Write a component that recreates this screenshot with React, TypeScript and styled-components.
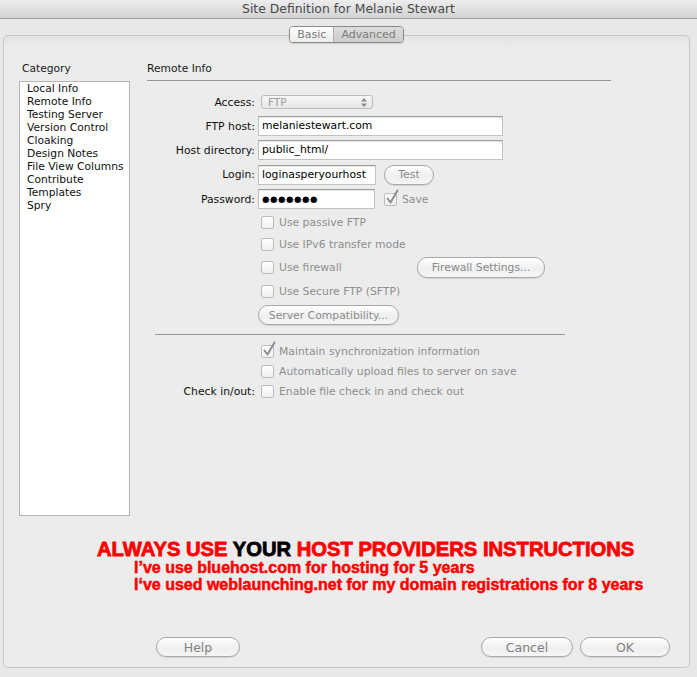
import React from 'react'
import styled, { createGlobalStyle } from 'styled-components'

const GlobalStyle = createGlobalStyle`
  html, body {
    margin: 0;
    padding: 0;
    background: #e8e8e8;
  }
  body {
    font-family: 'DejaVu Sans', 'Liberation Sans', sans-serif;
  }
`

const categories = [
  'Local Info',
  'Remote Info',
  'Testing Server',
  'Version Control',
  'Cloaking',
  'Design Notes',
  'File View Columns',
  'Contribute',
  'Templates',
  'Spry',
]

const CheckMark = () => (
  <svg width="14" height="17" viewBox="0 0 14 17">
    <path
      d="M2.5 9.5 L5.5 13.5 L12.5 1.5"
      fill="none"
      stroke="#8d8d8d"
      strokeWidth="2"
      strokeLinecap="round"
      strokeLinejoin="round"
    />
  </svg>
)

const Check: React.FC<{ checked?: boolean; children: React.ReactNode; width?: number }> = props => (
  <CheckItem width={props.width}>
    <Box>{props.checked && <Tick><CheckMark /></Tick>}</Box>
    <span>{props.children}</span>
  </CheckItem>
)

export default function App() {
  return (
    <Window>
      <GlobalStyle />
      <TitleBar>Site Definition for Melanie Stewart</TitleBar>
      <TabsRow>
        <Tabs>
          <Tab>Basic</Tab>
          <Tab active>Advanced</Tab>
        </Tabs>
      </TabsRow>
      <Panel>
        <Columns>
          <Sidebar>
            <SectionTitle indent>Category</SectionTitle>
            <CategoryList>
              {categories.map(c => (
                <CategoryItem key={c}>{c}</CategoryItem>
              ))}
            </CategoryList>
          </Sidebar>
          <Main>
            <MainHeader>Remote Info</MainHeader>
            <FormRow h={24}>
              <Label>Access:</Label>
              <Control>
                <Select>
                  <span>FTP</span>
                  <Arrows>
                    <svg width="6" height="9" viewBox="0 0 6 9">
                      <path d="M0 3.5 L3 0 L6 3.5 Z M0 5.5 L3 9 L6 5.5 Z" fill="#8a8a8a" />
                    </svg>
                  </Arrows>
                </Select>
              </Control>
            </FormRow>
            <FormRow h={24}>
              <Label>FTP host:</Label>
              <Control>
                <TextField width={245} readOnly value="melaniestewart.com" />
              </Control>
            </FormRow>
            <FormRow h={24}>
              <Label>Host directory:</Label>
              <Control>
                <TextField width={245} readOnly value="public_html/" />
              </Control>
            </FormRow>
            <FormRow h={25}>
              <Label>Login:</Label>
              <Control>
                <TextField width={118} readOnly value="loginasperyourhost" />
                <PushButton width={50} offset={8}>Test</PushButton>
              </Control>
            </FormRow>
            <FormRow h={24}>
              <Label>Password:</Label>
              <Control>
                <PasswordField width={117} readOnly value="●●●●●●●" />
                <SaveCheck>
                  <Check checked>Save</Check>
                </SaveCheck>
              </Control>
            </FormRow>
            <FormRow h={22}>
              <span />
              <Control>
                <Check>Use passive FTP</Check>
              </Control>
            </FormRow>
            <FormRow h={22}>
              <span />
              <Control>
                <Check>Use IPv6 transfer mode</Check>
              </Control>
            </FormRow>
            <FormRow h={25}>
              <span />
              <Control>
                <Check width={156}>Use firewall</Check>
                <PushButton width={128} tall>Firewall Settings...</PushButton>
              </Control>
            </FormRow>
            <FormRow h={23}>
              <span />
              <Control>
                <Check>Use Secure FTP (SFTP)</Check>
              </Control>
            </FormRow>
            <FormRow h={24}>
              <span />
              <Control>
                <PushButton width={141}>Server Compatibility...</PushButton>
              </Control>
            </FormRow>
            <Separator />
            <FormRow h={20}>
              <span />
              <Control>
                <Check checked>Maintain synchronization information</Check>
              </Control>
            </FormRow>
            <FormRow h={20}>
              <span />
              <Control>
                <Check>Automatically upload files to server on save</Check>
              </Control>
            </FormRow>
            <FormRow h={20}>
              <Label>Check in/out:</Label>
              <Control>
                <Check>Enable file check in and check out</Check>
              </Control>
            </FormRow>
          </Main>
        </Columns>
        <Notice>
          <NoticeHead>
            ALWAYS USE <Black>YOUR</Black> HOST PROVIDERS INSTRUCTIONS
          </NoticeHead>
          <NoticeLine>I’ve use bluehost.com for hosting for 5 years</NoticeLine>
          <NoticeLine>I‘ve used weblaunching.net for my domain registrations for 8 years</NoticeLine>
        </Notice>
        <Footer>
          <FooterButton width={84}>Help</FooterButton>
          <FooterSpacer />
          <FooterButton width={92}>Cancel</FooterButton>
          <FooterButton width={90}>OK</FooterButton>
        </Footer>
      </Panel>
    </Window>
  )
}

const Window = styled.div`
  width: 697px;
  height: 677px;
  background: #e8e8e8;
  display: flex;
  flex-direction: column;
  overflow: hidden;
`

const TitleBar = styled.div`
  height: 19px;
  box-sizing: border-box;
  border-bottom: 1px solid #a3a3a3;
  background: linear-gradient(#ededed, #d3d3d3);
  display: flex;
  align-items: center;
  justify-content: center;
  padding-bottom: 1px;
  font-size: 12.4px;
  color: #4a4a4a;
`

const TabsRow = styled.div`
  display: flex;
  justify-content: center;
  padding: 0 7px 0 3px;
  margin-top: 7px;
  position: relative;
  z-index: 1;
`

const Tabs = styled.div`
  display: flex;
  height: 17px;
  box-sizing: border-box;
  border: 1px solid #8a8a8a;
  border-radius: 4px;
  overflow: hidden;
  box-shadow: 0 1px 1px rgba(0, 0, 0, 0.12);
`

const Tab = styled.div<{ active?: boolean }>`
  display: flex;
  align-items: center;
  padding: 0 7px;
  font-size: 11px;
  color: #7c7c7c;
  background: ${p =>
    p.active ? 'linear-gradient(#dcdcdc, #cdcdcd)' : 'linear-gradient(#ffffff, #ececec)'};
  & + & {
    border-left: 1px solid #b0b0b0;
  }
`

const Panel = styled.div`
  margin: -8px 7px 0 3px;
  height: 633px;
  box-sizing: border-box;
  border: 1px solid #c6c6c6;
  border-radius: 5px;
  background: linear-gradient(#e3e3e3, #ececec 12px);
  display: flex;
  flex-direction: column;
  padding: 26px 19px 10px 15px;
`

const Columns = styled.div`
  display: flex;
  gap: 17px;
  height: 454px;
`

const Sidebar = styled.div`
  width: 111px;
  display: flex;
  flex-direction: column;
`

const SectionTitle = styled.div<{ indent?: boolean }>`
  font-size: 10.7px;
  line-height: 13px;
  color: #1a1a1a;
  padding-left: ${p => (p.indent ? '3px' : '0')};
`

const CategoryList = styled.ul`
  list-style: none;
  margin: 6px 0 0;
  padding: 0 0 0 7px;
  flex: 1;
  background: #ffffff;
  border: 1px solid #b4b4b4;
`

const CategoryItem = styled.li`
  font-size: 10.7px;
  line-height: 13px;
  color: #111;
`

const Main = styled.div`
  width: 464px;
  display: flex;
  flex-direction: column;
`

const MainHeader = styled.div`
  font-size: 10.7px;
  line-height: 13px;
  color: #1a1a1a;
  padding-bottom: 5px;
  border-bottom: 1px solid #959595;
  margin-bottom: 9px;
`

const FormRow = styled.div<{ h: number }>`
  display: grid;
  grid-template-columns: 108px 1fr;
  column-gap: 3px;
  align-items: center;
  height: ${p => p.h}px;
`

const Label = styled.span`
  text-align: right;
  font-size: 10.8px;
  color: #111;
`

const Control = styled.div`
  display: flex;
  align-items: center;
`

const TextField = styled.input<{ width: number }>`
  width: ${p => p.width}px;
  height: 20px;
  box-sizing: border-box;
  border: 1px solid #c2c2c2;
  border-top-color: #9c9c9c;
  background: #ffffff;
  padding: 0 3px 1px;
  font-family: 'DejaVu Sans', sans-serif;
  font-size: 10.8px;
  line-height: 17px;
  color: #000;
  box-shadow: inset 0 1px 1px rgba(0, 0, 0, 0.1);
  outline: none;
  margin: 0;
`

const PasswordField = styled(TextField)`
  font-size: 8.6px;
  letter-spacing: 0.5px;
`

const Select = styled.div`
  margin-left: 3px;
  width: 112px;
  height: 14px;
  box-sizing: border-box;
  border: 1px solid #bcbcbc;
  border-radius: 3px;
  background: linear-gradient(#f7f7f7, #e6e6e6);
  display: flex;
  align-items: center;
  justify-content: space-between;
  padding: 0 5px 0 6px;
  font-size: 10.5px;
  color: #9c9c9c;
`

const Arrows = styled.span`
  display: flex;
  align-items: center;
`

const PushButton = styled.button<{ width: number; offset?: number; tall?: boolean }>`
  width: ${p => p.width}px;
  height: ${p => (p.tall ? 21 : 20)}px;
  margin: 0 0 0 ${p => p.offset || 0}px;
  padding: 0;
  box-sizing: border-box;
  border: 1px solid #a8a8a8;
  border-radius: 10px;
  background: linear-gradient(#ffffff, #efefef 55%, #f6f6f6);
  box-shadow: 0 1px 1px rgba(0, 0, 0, 0.1);
  font-family: 'DejaVu Sans', sans-serif;
  font-size: 10.8px;
  color: #8a8a8a;
`

const CheckItem = styled.label<{ width?: number }>`
  display: flex;
  align-items: center;
  gap: 5px;
  margin-left: 3px;
  font-size: 10.8px;
  color: #8e8e8e;
  ${p => (p.width ? `width: ${p.width}px;` : '')}
`

const Box = styled.span`
  position: relative;
  width: 13px;
  height: 13px;
  box-sizing: border-box;
  border: 1px solid #bcbcbc;
  border-radius: 2px;
  background: linear-gradient(#ffffff, #efefef);
  flex-shrink: 0;
`

const Tick = styled.span`
  position: absolute;
  left: 0;
  top: -5px;
  display: flex;
`

const SaveCheck = styled.div`
  margin-left: 6px;
`

const Separator = styled.div`
  margin: 7px 0 6px 8px;
  width: 410px;
  border-top: 1px solid #959595;
`

const Notice = styled.div`
  margin: 24px 0 0 78px;
  font-family: 'Liberation Sans', Arial, sans-serif;
  font-weight: 700;
  color: #ff0000;
  -webkit-text-stroke: 0.5px #ff0000;
`

const NoticeHead = styled.div`
  font-size: 20.2px;
  line-height: 19px;
  -webkit-text-stroke-width: 0.8px;
`

const Black = styled.span`
  color: #000;
  -webkit-text-stroke-color: #000;
`

const NoticeLine = styled.div`
  margin-left: 37px;
  font-size: 16px;
  line-height: 17px;
`

const Footer = styled.div`
  margin-top: auto;
  display: flex;
  align-items: center;
  gap: 7px;
  padding-left: 137px;
`

const FooterSpacer = styled.div`
  flex: 1;
`

const FooterButton = styled.button<{ width: number }>`
  width: ${p => p.width}px;
  height: 20px;
  padding: 0;
  box-sizing: border-box;
  border: 1px solid #a8a8a8;
  border-radius: 10px;
  background: linear-gradient(#ffffff, #efefef 55%, #f6f6f6);
  box-shadow: 0 1px 1px rgba(0, 0, 0, 0.1);
  font-family: 'DejaVu Sans', sans-serif;
  font-size: 12.5px;
  color: #808080;
`
